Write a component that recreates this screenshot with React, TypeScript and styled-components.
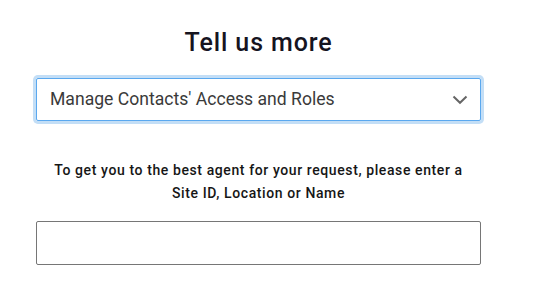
import React from "react";
import styled, { createGlobalStyle } from "styled-components";

const Global = createGlobalStyle`
  html, body { margin: 0; padding: 0; background: #ffffff; }
  body { font-family: Roboto, "Noto Sans", Arial, sans-serif; }
`;

const Page = styled.div`
  width: 445px;
  padding: 0 0 0 36px;
  display: flex;
  flex-direction: column;
`;

const Title = styled.h2`
  margin: 28px 0 0;
  font-size: 25px;
  font-weight: 500;
  letter-spacing: 0.9px;
  line-height: 30px;
  color: #16141f;
  text-align: center;
`;

const SelectWrap = styled.div`
  margin-top: 20px;
  height: 43px;
  box-sizing: border-box;
  border: 1px solid #5aa8ef;
  border-radius: 2px;
  box-shadow: 0 0 0 3px #c3def6;
  display: flex;
  align-items: center;
  justify-content: space-between;
  padding: 0 12px 0 13px;
`;

const SelectText = styled.span`
  font-size: 17.6px;
  color: #3a3a3a;
  line-height: 1;
`;

const Hint = styled.p`
  margin: 38px 0 0;
  font-size: 14px;
  font-weight: 500;
  letter-spacing: 0.6px;
  line-height: 23px;
  color: #161616;
  text-align: center;
  padding: 0 14px;
`;

const Input = styled.input`
  margin-top: 16px;
  height: 44px;
  box-sizing: border-box;
  width: 445px;
  border: 1px solid #767676;
  border-radius: 2px;
  outline: none;
  font-family: inherit;
  font-size: 16px;
  padding: 0 12px;
`;

const Chevron = () => (
  <svg width="16" height="10" viewBox="0 0 16 10" fill="none">
    <path d="M1.5 1.5 L8 7.8 L14.5 1.5" stroke="#666" strokeWidth="2" />
  </svg>
);

export default function App() {
  return (
    <>
      <Global />
      <Page>
        <Title>Tell us more</Title>
        <SelectWrap>
          <SelectText>Manage Contacts' Access and Roles</SelectText>
          <Chevron />
        </SelectWrap>
        <Hint>
          To get you to the best agent for your request, please enter a Site ID, Location or Name
        </Hint>
        <Input type="text" />
      </Page>
    </>
  );
}
